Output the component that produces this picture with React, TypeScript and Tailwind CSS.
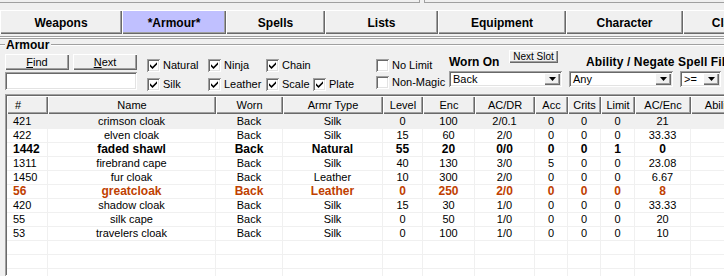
import React from "react";

const RAISED =
  "shadow-[inset_1px_1px_0_#ffffff,inset_-1px_-1px_0_#696969,inset_-2px_-2px_0_#a0a0a0]";
const SUNKEN =
  "shadow-[inset_1px_1px_0_#a0a0a0,inset_-1px_-1px_0_#ffffff,inset_2px_2px_0_#696969,inset_-2px_-2px_0_#e3e3e3]";

function Btn({ className, children }: { className: string; children: React.ReactNode }) {
  return (
    <div className={`flex items-center justify-center shrink-0 bg-[#f0f0f0] ${RAISED} ${className}`}>
      {children}
    </div>
  );
}

function Check({ checked, label }: { checked: boolean; label: string }) {
  return (
    <div className="flex items-center gap-[3px] h-[13px] shrink-0">
      <div className={`w-[13px] h-[13px] bg-white ${SUNKEN} flex items-center justify-center shrink-0`}>
        {checked && (
          <svg width="7" height="7" viewBox="0 0 7 7">
            <path d="M0 2.2 L2.5 4.7 L7 0.2 L7 2.6 L2.5 7 L0 4.6 Z" fill="#000" />
          </svg>
        )}
      </div>
      <span className="leading-[13px] whitespace-nowrap">{label}</span>
    </div>
  );
}

function Select({ className, value }: { className: string; value: string }) {
  return (
    <div className={`h-[16px] bg-white ${SUNKEN} flex items-center shrink-0 ${className}`}>
      <span className="flex-1 pl-[4px] leading-[12px] whitespace-nowrap overflow-hidden">{value}</span>
      <div className={`w-[16px] h-[12px] mr-[2px] bg-[#f0f0f0] ${RAISED} flex items-center justify-center shrink-0`}>
        <svg width="7" height="4" viewBox="0 0 7 4">
          <path d="M0 0 H7 L3.5 4 Z" fill="#000" />
        </svg>
      </div>
    </div>
  );
}

const tabs = [
  { label: "Weapons", w: "w-[122px]" },
  { label: "*Armour*", w: "w-[104px]", active: true },
  { label: "Spells", w: "w-[99px]" },
  { label: "Lists", w: "w-[113px]" },
  { label: "Equipment", w: "w-[128px]" },
  { label: "Character", w: "w-[117px]" },
  { label: "Classes", w: "w-[103px]" },
];

const cols = [
  { h: "#", w: "w-[41px]", left: true },
  { h: "Name", w: "w-[168px]" },
  { h: "Worn", w: "w-[67px]" },
  { h: "Armr Type", w: "w-[100px]" },
  { h: "Level", w: "w-[40px]" },
  { h: "Enc", w: "w-[52px]" },
  { h: "AC/DR", w: "w-[60px]" },
  { h: "Acc", w: "w-[33px]" },
  { h: "Crits", w: "w-[33px]" },
  { h: "Limit", w: "w-[34px]" },
  { h: "AC/Enc", w: "w-[56px]" },
  { h: "Ability", w: "w-[57px]" },
  { h: "", w: "w-[60px]" },
];

type Row = { cells: string[]; kind?: "sel" | "bold" | "orange" };

const rows: Row[] = [
  { cells: ["421", "crimson cloak", "Back", "Silk", "0", "100", "2/0.1", "0", "0", "0", "21", "", ""], kind: "sel" },
  { cells: ["422", "elven cloak", "Back", "Silk", "15", "60", "2/0", "0", "0", "0", "33.33", "", ""] },
  { cells: ["1442", "faded shawl", "Back", "Natural", "55", "20", "0/0", "0", "0", "1", "0", "", ""], kind: "bold" },
  { cells: ["1311", "firebrand cape", "Back", "Silk", "40", "130", "3/0", "5", "0", "0", "23.08", "", ""] },
  { cells: ["1450", "fur cloak", "Back", "Leather", "10", "300", "2/0", "0", "0", "0", "6.67", "", ""] },
  { cells: ["56", "greatcloak", "Back", "Leather", "0", "250", "2/0", "0", "0", "0", "8", "", ""], kind: "orange" },
  { cells: ["420", "shadow cloak", "Back", "Silk", "15", "30", "1/0", "0", "0", "0", "33.33", "", ""] },
  { cells: ["55", "silk cape", "Back", "Silk", "0", "50", "1/0", "0", "0", "0", "20", "", ""] },
  { cells: ["53", "travelers cloak", "Back", "Silk", "0", "100", "1/0", "0", "0", "0", "10", "", ""] },
  { cells: Array(13).fill("") },
  { cells: Array(13).fill("") },
  { cells: Array(13).fill("") },
];

export default function App() {
  return (
    <div className="w-[724px] h-[276px] overflow-hidden bg-[#f0f0f0] text-black text-[11px] font-['Liberation_Sans',Arial,sans-serif] flex flex-col">
      {/* top strip */}
      <div className="flex h-[3px] shrink-0">
        <div className="w-[420px] border-b border-r border-[#a0a0a0]" />
        <div className="w-[4px]" />
        <div className="flex-1 border-b border-l border-[#a0a0a0]" />
      </div>

      {/* tabs */}
      <div className="mt-[7px] flex h-[24px] shrink-0">
        {tabs.map((t) => (
          <div
            key={t.label}
            className={`${t.w} shrink-0 h-full flex items-center justify-center pt-[1px] font-bold text-[12px] leading-[14px] whitespace-nowrap ${RAISED} ${
              t.active ? "bg-[#c0c0ff]" : "bg-[#f0f0f0]"
            }`}
          >
            {t.label}
          </div>
        ))}
      </div>

      {/* separator */}
      <div className="mt-[2px] h-[3px] border-y border-[#a0a0a0] bg-white shrink-0" />

      {/* group label */}
      <div className="flex items-start h-[11px] shrink-0">
        <div className="mt-[5px] w-[5px] h-[2px] border-t border-[#a0a0a0] bg-white" />
        <span className="ml-[1px] font-bold text-[12px] leading-[12px]">Armour</span>
        <div className="mt-[5px] ml-[2px] flex-1 h-[2px] border-t border-[#a0a0a0] bg-white" />
      </div>

      {/* controls */}
      <div className="flex h-[44px] shrink-0">
        <div className="ml-[5px] w-[132px] pt-[4px] flex flex-col shrink-0">
          <div className="flex gap-[4px]">
            <Btn className="w-[64px] h-[16px]">
              <span>
                <span className="underline">F</span>ind
              </span>
            </Btn>
            <Btn className="w-[64px] h-[16px]">
              <span>
                <span className="underline">N</span>ext
              </span>
            </Btn>
          </div>
          <div className={`mt-[2px] h-[18px] bg-white ${SUNKEN}`} />
        </div>

        <div className="ml-[10px] w-[229px] pt-[9px] flex flex-col gap-[6px] shrink-0">
          <div className="flex">
            <div className="w-[61px]"><Check checked label="Natural" /></div>
            <div className="w-[58px]"><Check checked label="Ninja" /></div>
            <div className="w-[47px]"><Check checked label="Chain" /></div>
          </div>
          <div className="flex">
            <div className="w-[61px]"><Check checked label="Silk" /></div>
            <div className="w-[58px]"><Check checked label="Leather" /></div>
            <div className="w-[47px]"><Check checked label="Scale" /></div>
            <div><Check checked label="Plate" /></div>
          </div>
        </div>

        <div className="w-[73px] pt-[9px] flex flex-col gap-[4px] shrink-0">
          <Check checked={false} label="No Limit" />
          <Check checked={false} label="Non-Magic" />
        </div>

        <div className="w-[113px] flex flex-col shrink-0">
          <div className="flex items-start h-[19px]">
            <span className="w-[60px] mt-[5px] font-bold text-[12px] leading-[14px] whitespace-nowrap">Worn On</span>
            <Btn className="w-[49px] h-[13px] text-[10px] leading-[11px]">Next Slot</Btn>
          </div>
          <Select className="mt-[2px] w-[113px]" value="Back" />
        </div>

        <div className="ml-[7px] flex flex-col shrink-0">
          <div className="h-[19px] pl-[17px] pt-[5px] font-bold text-[12px] leading-[14px] tracking-[0.12px] whitespace-nowrap">
            Ability / Negate Spell Filter
          </div>
          <div className="mt-[2px] flex gap-[7px]">
            <Select className="w-[104px]" value="Any" />
            <Select className="w-[41px]" value=">=" />
          </div>
        </div>
      </div>

      {/* table */}
      <div className={`ml-[5px] w-[780px] flex-1 min-h-0 overflow-hidden bg-white pl-[2px] pt-[2px] ${SUNKEN}`}>
        <div className="flex h-[18px]">
          {cols.map((c, i) => (
            <div
              key={i}
              className={`${c.w} shrink-0 h-full flex items-center bg-[#f0f0f0] ${RAISED} leading-[13px] whitespace-nowrap ${
                c.left ? "justify-start pl-[8px]" : "justify-center"
              }`}
            >
              {c.h}
            </div>
          ))}
        </div>
        {rows.map((r, ri) => (
          <div
            key={ri}
            className={`flex h-[14px] border-t border-[#f0f0f0] ${r.kind === "sel" ? "bg-[#f0f0f0]" : "bg-white"} ${
              r.kind === "bold" || r.kind === "orange" ? "font-bold text-[12px]" : ""
            } ${r.kind === "orange" ? "text-[#c04000]" : ""}`}
          >
            {r.cells.map((v, ci) => (
              <div
                key={ci}
                className={`${cols[ci].w} shrink-0 h-full flex items-center border-r border-[#f0f0f0] leading-[13px] whitespace-nowrap ${
                  cols[ci].left ? "justify-start pl-[6px]" : "justify-center"
                }`}
              >
                {v}
              </div>
            ))}
          </div>
        ))}
      </div>
    </div>
  );
}
